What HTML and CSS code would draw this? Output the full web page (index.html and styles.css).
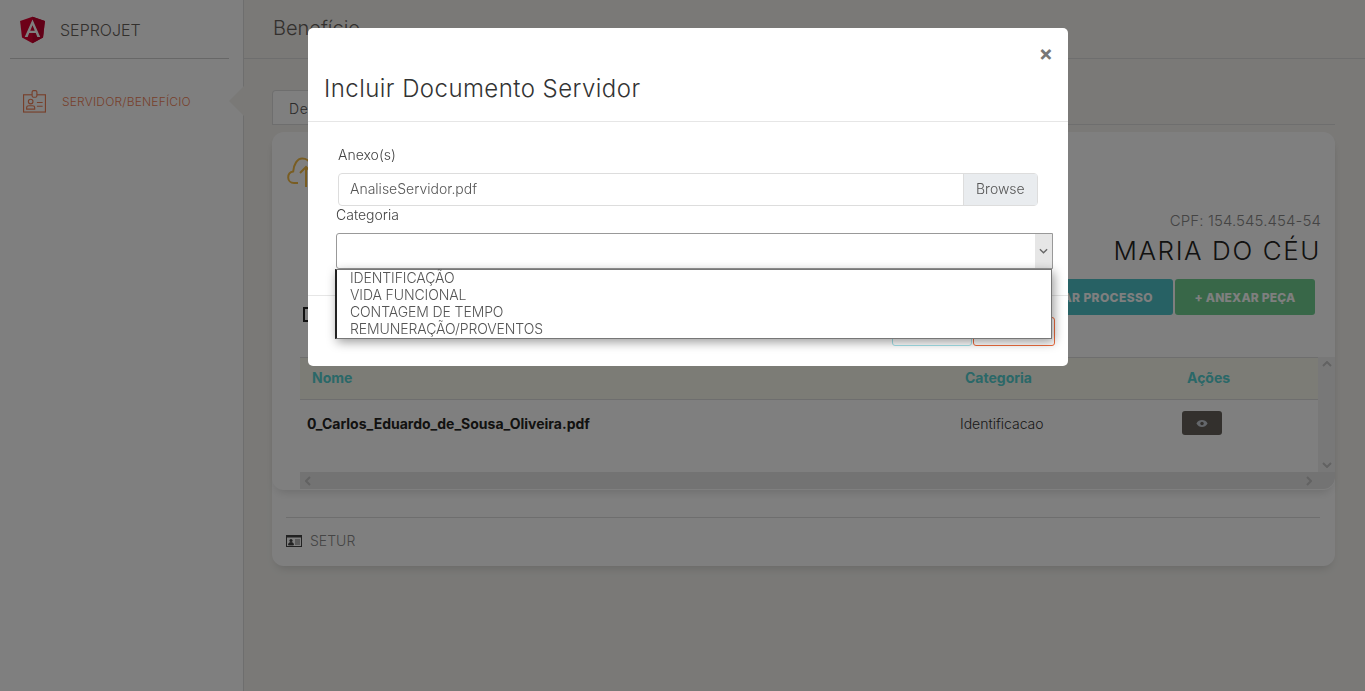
FILE: index.html
```html
<!DOCTYPE html>
<html lang="pt-BR">
<head>
  <meta charset="UTF-8">
  <title>Benefício</title>
  <link rel="stylesheet" href="styles.css">
</head>
<body>
  <div class="app">
    <aside class="sidebar">
      <div class="brand">
        <svg class="brand-logo" viewBox="25 25 200 210">
          <polygon fill="#DD0031" points="125,30 31.9,63.2 46.1,186.3 125,230 203.9,186.3 218.1,63.2"/>
          <polygon fill="#C3002F" points="125,30 125,230 203.9,186.3 218.1,63.2"/>
          <path fill="#fff" d="M125,52.1L66.8,182.6h21.7l11.7-29.2h49.4l11.7,29.2h21.7L125,52.1z M142,135.4H108l17-40.9L142,135.4z"/>
        </svg>
        <span class="brand-name">SEPROJET</span>
      </div>
      <div class="nav-item">
        <svg class="nav-icon" viewBox="0 0 24 24" fill="none" stroke="#ef8157" stroke-width="1.2">
          <rect x="0.6" y="5" width="22.8" height="18"/>
          <rect x="9.5" y="0.6" width="5" height="7" rx="1.5" fill="#fff"/>
          <circle cx="8" cy="12" r="2.4"/>
          <path d="M3.8 20v-1.6c0-1.4 1.2-2 2.4-2h3.6c1.2 0 2.4.6 2.4 2V20z"/>
          <path d="M14.5 13h6M14.5 17h6"/>
        </svg>
        <span class="nav-label">SERVIDOR/BENEFÍCIO</span>
      </div>
      <span class="nav-arrow"></span>
    </aside>

    <main class="main">
      <header class="topbar">Benefício</header>
      <div class="content">
        <div class="tabs"><span class="tab">Dependentes</span></div>
        <section class="card">
          <div class="panel">
            <svg class="cloud" viewBox="0 0 30 30" fill="none" stroke="#f3bb45" stroke-width="2">
              <path d="M11 26H7C3.500 26 1.200 23.500 1.200 20.500c0-3 2-5.500 5-6 .5-7 4-13 9-13 4 0 7 2 9 6"/>
              <path d="M19 30V10M13 16l6-6 6 6"/>
            </svg>
            <div class="person">
              <div class="person-cpf">CPF: 154.545.454-54</div>
              <div class="person-name">MARIA DO CÉU</div>
            </div>
            <div class="actions">
              <button class="btn btn-info">+ ANEXAR PROCESSO</button>
              <button class="btn btn-success">+ ANEXAR PEÇA</button>
            </div>
            <span class="doc-check"></span>
            <div class="table-wrap">
              <div class="table-body">
                <table class="docs">
                  <thead>
                    <tr><th class="col-name">Nome</th><th class="col-cat">Categoria</th><th>Ações</th></tr>
                  </thead>
                  <tbody>
                    <tr>
                      <td class="file-name">0_Carlos_Eduardo_de_Sousa_Oliveira.pdf</td>
                      <td>Identificacao</td>
                      <td>
                        <button class="btn-view">
                          <svg viewBox="0 0 14 10" width="12" height="9">
                            <path fill="#c9ced6" d="M0.500 5C2 2 4.500 1 7 1s5 1 6.500 4C12 8 9.500 9 7 9S2 8 .5 5z"/>
                            <circle cx="7" cy="5" r="2" fill="#66615b"/>
                          </svg>
                        </button>
                      </td>
                    </tr>
                  </tbody>
                </table>
              </div>
              <div class="vscroll">
                <svg viewBox="0 0 10 6" width="10" height="6"><path d="M1 5l4-4 4 4" fill="none" stroke="#c4c4c4" stroke-width="2"/></svg>
                <svg viewBox="0 0 10 6" width="10" height="6"><path d="M1 1l4 4 4-4" fill="none" stroke="#c4c4c4" stroke-width="2"/></svg>
              </div>
              <div class="hscroll">
                <svg viewBox="0 0 6 10" width="6" height="10"><path d="M5 1L1 5l4 4" fill="none" stroke="#c4c4c4" stroke-width="2"/></svg>
                <svg viewBox="0 0 6 10" width="6" height="10"><path d="M1 1l4 4-4 4" fill="none" stroke="#c4c4c4" stroke-width="2"/></svg>
              </div>
            </div>
          </div>
          <div class="card-foot">
            <svg class="foot-icon" viewBox="0 0 16 12">
              <rect x="0.500" y="0.500" width="15" height="11" fill="none" stroke="#444"/>
              <rect x="1" y="1" width="14" height="1.500" fill="#444"/>
              <circle cx="5" cy="5.500" r="1.600" fill="#444"/>
              <path d="M2.500 10c0-2 1-2.500 2.500-2.500S7.500 8 7.500 10zM9 5h5M9 7h5M9 9h5" fill="#444" stroke="#444" stroke-width=".8"/>
            </svg>
            <span>SETUR</span>
          </div>
        </section>
      </div>
    </main>
  </div>

  <div class="backdrop"></div>

  <div class="modal">
    <div class="modal-head">
      <button class="modal-close">×</button>
      <h4 class="modal-title">Incluir Documento Servidor</h4>
    </div>
    <div class="modal-body">
      <label class="field-label">Anexo(s)</label>
      <div class="file-input">
        <span class="file-name-text">AnaliseServidor.pdf</span>
        <span class="file-browse">Browse</span>
      </div>
      <label class="field-label field-label-cat">Categoria</label>
      <div class="select-box">
        <span class="select-arrow">
          <svg viewBox="0 0 10 6" width="9" height="6"><path d="M1 1l4 4 4-4" fill="none" stroke="#666" stroke-width="1.500"/></svg>
        </span>
      </div>
      <ul class="select-list">
        <li>IDENTIFICAÇÃO</li>
        <li>VIDA FUNCIONAL</li>
        <li>CONTAGEM DE TEMPO</li>
        <li>REMUNERAÇÃO/PROVENTOS</li>
      </ul>
    </div>
    <div class="modal-foot">
      <button class="btn-outline btn-outline-info"></button>
      <button class="btn-outline btn-outline-danger"></button>
    </div>
  </div>
</body>
</html>
```

FILE: styles.css
```css
* {
  box-sizing: border-box;
}
html, body {
  height: 100%;
}
body {
  margin: 0;
  overflow: hidden;
  font-family: "Inter", "Liberation Sans", sans-serif;
  font-size: 14px;
  color: #333;
  background: #f4f3ef;
}
button {
  font-family: inherit;
}

.app {
  display: flex;
  height: 691px;
}

/* sidebar */
.sidebar {
  position: relative;
  width: 244px;
  flex-shrink: 0;
  background: #fff;
  border-right: 1px solid #ddd;
  padding: 0 14px 0 10px;
}
.brand {
  display: flex;
  align-items: center;
  height: 59px;
  padding: 2px 0 0 9px;
  border-bottom: 1px solid #cfcfcf;
}
.brand-logo {
  width: 27px;
  height: 28px;
}
.brand-name {
  margin-left: 14px;
  font-size: 16px;
  font-weight: 300;
  color: #66615b;
}
.nav-item {
  display: flex;
  align-items: center;
  margin-top: 31px;
  padding-left: 13px;
}
.nav-icon {
  width: 23px;
  height: 23px;
}
.nav-label {
  margin-left: 16px;
  font-size: 12px;
  font-weight: 300;
  letter-spacing: .2px;
  color: #ef8157;
}
.nav-arrow {
  position: absolute;
  right: -1px;
  top: 86px;
  border-top: 15px solid transparent;
  border-bottom: 15px solid transparent;
  border-right: 15px solid #f4f3ef;
}

/* main */
.main {
  flex: 1;
  min-width: 0;
}
.topbar {
  height: 59px;
  padding: 16px 0 0 29px;
  font-size: 20px;
  font-weight: 300;
  color: #66615b;
  border-bottom: 1px solid #ddd;
}
.content {
  padding: 31px 30px 0 28px;
}
.tabs {
  height: 35px;
  border-bottom: 1px solid #ddd;
}
.tab {
  display: block;
  width: 130px;
  height: 34px;
  padding: 9px 0 0 16px;
  background: #fff;
  border: 1px solid #ddd;
  border-bottom: 0;
  border-radius: 4px 4px 0 0;
  font-weight: 300;
  letter-spacing: .6px;
  color: #555;
}
.card {
  margin-top: 7px;
  height: 434px;
  background: #fff;
  border-radius: 12px;
  box-shadow: 0 6px 10px -4px rgba(0, 0, 0, .15);
}
.panel {
  position: relative;
  height: 358px;
  padding-top: 25px;
  border-radius: 12px;
  box-shadow: 0 6px 10px -4px rgba(0, 0, 0, .15);
}
.cloud {
  display: block;
  width: 30px;
  height: 30px;
  margin-left: 15px;
}
.person {
  margin: 25px 14px 0 0;
  text-align: right;
}
.person-cpf {
  font-size: 15px;
  font-weight: 300;
  line-height: 18px;
  letter-spacing: .1px;
  color: #888;
}
.person-name {
  margin-top: 6px;
  font-size: 26px;
  font-weight: 300;
  line-height: 30px;
  letter-spacing: 1.6px;
  color: #252422;
}
.actions {
  display: flex;
  justify-content: flex-end;
  gap: 2px;
  margin: 13px 20px 0 0;
}
.btn {
  height: 36px;
  border: 0;
  border-radius: 3px;
  color: #fff;
  font-size: 12px;
  font-weight: 800;
  letter-spacing: .2px;
}
.btn-info {
  width: 190px;
  padding-right: 20px;
  text-align: right;
  letter-spacing: .4px;
  background: #4fc3c8;
}
.btn-success {
  width: 140px;
  background: #70cf90;
}
.doc-check {
  position: absolute;
  left: 31px;
  top: 175px;
  width: 16px;
  height: 15px;
  border: 2px solid #222;
}
.table-wrap {
  display: grid;
  grid-template-columns: 1fr 17px;
  grid-template-rows: 115px 17px;
  margin: 42px 0 0 28px;
  height: 132px;
}
.table-body {
  overflow: hidden;
}
.docs {
  width: 100%;
  table-layout: fixed;
  border-collapse: collapse;
}
.docs th {
  height: 42px;
  padding: 0 0 2px 12px;
  text-align: left;
  font-weight: 700;
  color: #55d0d0;
  background: #f9f9ec;
  border-top: 1px solid #ddd;
  border-bottom: 1px solid #ddd;
}
.docs .col-name {
  width: 653px;
}
.docs .col-cat {
  width: 222px;
}
.docs td {
  height: 47px;
  padding: 0 0 0 7px;
  font-weight: 300;
  color: #333;
}
.docs .file-name {
  font-weight: 700;
  color: #252422;
}
.btn-view {
  display: flex;
  align-items: center;
  justify-content: center;
  width: 40px;
  height: 24px;
  border: 0;
  border-radius: 3px;
  background: #66615b;
}
.vscroll {
  display: flex;
  flex-direction: column;
  justify-content: space-between;
  align-items: center;
  padding: 4px 0;
  background: #f1f1f1;
}
.hscroll {
  grid-column: 1 / 3;
  display: flex;
  justify-content: space-between;
  align-items: center;
  padding: 0 23px 0 5px;
  background: #e6e6e6;
  border-radius: 0 0 12px 0;
}
.card-foot {
  display: flex;
  align-items: center;
  margin: 27px 15px 0 14px;
  padding-top: 14px;
  border-top: 1px solid #ddd;
  font-weight: 300;
  color: #8a8a8a;
}
.foot-icon {
  width: 16px;
  height: 12px;
  margin-right: 8px;
}

/* modal */
.backdrop {
  position: fixed;
  inset: 0;
  background: rgba(0, 0, 0, .5);
}
.modal {
  position: fixed;
  left: 308px;
  top: 28px;
  width: 760px;
  height: 338px;
  background: #fff;
  border-radius: 5px;
  display: flex;
  flex-direction: column;
}
.modal-head {
  position: relative;
  height: 94px;
  padding: 46px 0 0 16px;
  border-bottom: 1px solid #e6e6e6;
}
.modal-title {
  margin: 0;
  font-size: 24px;
  line-height: 30px;
  font-weight: 300;
  letter-spacing: .45px;
  color: #333;
}
.modal-close {
  position: absolute;
  right: 15px;
  top: 14px;
  padding: 0;
  border: 0;
  background: none;
  font-size: 21px;
  line-height: 24px;
  font-weight: 700;
  color: #777;
}
.modal-body {
  position: relative;
  height: 174px;
  padding: 25px 30px 0 30px;
  border-bottom: 1px solid #e6e6e6;
}
.field-label {
  display: block;
  line-height: 16px;
  font-weight: 300;
  color: #444;
}
.field-label-cat {
  margin: 1px 0 0 -2px;
}
.file-input {
  display: flex;
  align-items: stretch;
  height: 33px;
  margin-top: 10px;
  border: 1px solid #ddd;
  border-radius: 4px;
  font-weight: 300;
  color: #555;
}
.file-name-text {
  flex: 1;
  padding: 6px 0 0 11px;
}
.file-browse {
  width: 74px;
  padding: 6px 0 0 12px;
  background: #e9ecef;
  border-left: 1px solid #ddd;
  color: #555;
}
.select-box {
  display: flex;
  justify-content: flex-end;
  width: 717px;
  height: 36px;
  margin: 10px 0 0 -2px;
  border: 1px solid #999;
  border-radius: 3px 0 0 3px;
}
.select-arrow {
  display: flex;
  align-items: center;
  justify-content: center;
  width: 17px;
  background: #e6e6e6;
}
.select-list {
  position: absolute;
  z-index: 2;
  left: 27px;
  top: 147px;
  width: 717px;
  height: 70px;
  margin: 0;
  padding: 0 0 0 13px;
  list-style: none;
  background: #fff;
  border: 1px solid #777;
  border-left: 2px solid #222;
  box-shadow: 2px 3px 10px rgba(0, 0, 0, .4);
  line-height: 17px;
  font-weight: 300;
  letter-spacing: -.1px;
  color: #555;
}
.select-list li:first-child {
  margin-top: -1px;
}
.modal-foot {
  flex: 1;
  display: flex;
  justify-content: flex-end;
  gap: 1px;
  padding: 21px 13px 0 0;
}
.btn-outline {
  height: 29px;
  background: #fff;
  border-radius: 3px;
  border: 1px solid;
}
.btn-outline-info {
  width: 80px;
  border-color: #a3e3ea;
}
.btn-outline-danger {
  width: 82px;
  border-color: #ef6c3e;
}
```
